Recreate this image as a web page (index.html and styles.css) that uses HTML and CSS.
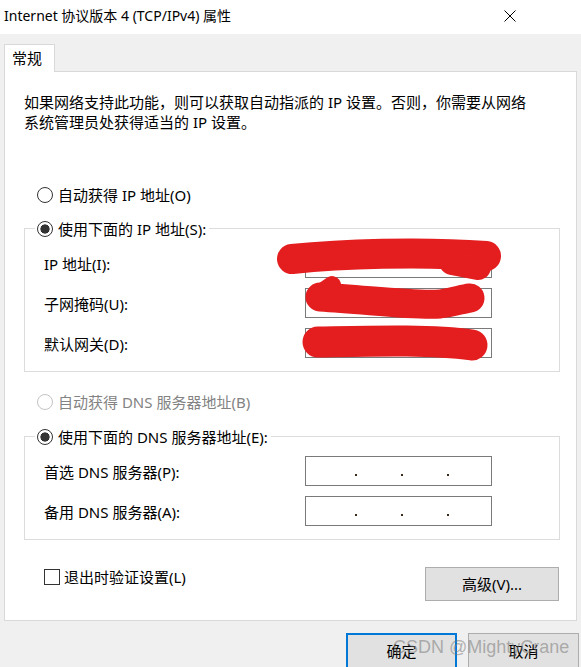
FILE: index.html
```html
<!DOCTYPE html>
<html lang="zh-CN">
<head>
<meta charset="utf-8">
<title>Internet 协议版本 4 (TCP/IPv4) 属性</title>
<link rel="stylesheet" href="styles.css">
</head>
<body>
<div class="window">
  <header class="titlebar">
    <span class="title">Internet 协议版本 4 (TCP/IPv4) 属性</span>
    <svg class="close" viewBox="0 0 12 12" width="12" height="12"><path d="M0.5 0.5 L11.5 11.5 M11.5 0.5 L0.5 11.5" stroke="#000" stroke-width="1" fill="none"/></svg>
  </header>
  <main class="client">
    <div class="tabs"><div class="tab">常规</div></div>
    <section class="panel">
      <p class="intro">如果网络支持此功能，则可以获取自动指派的 IP 设置。否则，你需要从网络<br>系统管理员处获得适当的 IP 设置。</p>

      <label class="opt opt-auto-ip"><input type="radio" class="radio" name="ip">自动获得 IP 地址(O)</label>

      <fieldset class="group group-ip">
        <legend class="legend"><label class="opt"><input type="radio" class="radio" name="ip" checked>使用下面的 IP 地址(S):</label></legend>
        <div class="fields">
          <span class="lbl">IP 地址(I):</span><div class="ipbox"></div>
          <span class="lbl">子网掩码(U):</span><div class="ipbox"></div>
          <span class="lbl">默认网关(D):</span><div class="ipbox"></div>
        </div>
      </fieldset>

      <label class="opt opt-auto-dns disabled"><input type="radio" class="radio" name="dns" disabled>自动获得 DNS 服务器地址(B)</label>

      <fieldset class="group group-dns">
        <legend class="legend"><label class="opt"><input type="radio" class="radio" name="dns" checked>使用下面的 DNS 服务器地址(E):</label></legend>
        <div class="fields">
          <span class="lbl">首选 DNS 服务器(P):</span><div class="ipbox dotted"><i class="dot"></i><i class="dot"></i><i class="dot"></i></div>
          <span class="lbl">备用 DNS 服务器(A):</span><div class="ipbox dotted"><i class="dot"></i><i class="dot"></i><i class="dot"></i></div>
        </div>
      </fieldset>

      <div class="bottom-row">
        <label class="check"><input type="checkbox" class="checkbox">退出时验证设置(L)</label>
        <button class="btn btn-adv">高级(V)...</button>
      </div>
    </section>
    <div class="actions">
      <button class="btn btn-dlg btn-default">确定</button>
      <button class="btn btn-dlg">取消</button>
    </div>
  </main>

  <svg class="redact" viewBox="0 0 581 667" width="581" height="667">
    <g fill="none" stroke="#e41d1f" stroke-linecap="round" stroke-linejoin="round">
      <path d="M292 259 C340 254 420 251 486 256" stroke-width="30"/>
      <path d="M452 262 L478 267" stroke-width="26"/>
      <path d="M320 297 C370 300 415 306 440 304 C455 302 462 299 470 298" stroke-width="29"/>
      <path d="M322 292 L332 285" stroke-width="18"/>
      <path d="M318 342 C370 341 430 339 472 345" stroke-width="31"/>
    </g>
  </svg>
  <div class="watermark">CSDN @MightyCrane</div>
</div>
</body>
</html>
```

FILE: styles.css
```css
* {
  box-sizing: border-box;
}

html,
body {
  margin: 0;
  padding: 0;
}

body {
  width: 581px;
  height: 667px;
  overflow: hidden;
  background: #f0f0f0;
  font-family: "Noto Sans", "Noto Sans CJK SC", sans-serif;
  font-size: 15px;
  color: #000;
}

.window {
  position: relative;
  width: 581px;
  height: 667px;
  overflow: hidden;
}

/* title bar */
.titlebar {
  height: 34px;
  background: #fff;
  display: flex;
  align-items: center;
  justify-content: space-between;
  padding: 0 65px 2px 4px;
}

.title {
  font-size: 14px;
  line-height: 20px;
  white-space: nowrap;
}

.close {
  display: block;
  width: 12px;
  height: 12px;
}

/* client */
.client {
  padding: 10px 0 0 4px;
}

.tabs {
  display: flex;
}

.tab {
  position: relative;
  z-index: 1;
  width: 51px;
  height: 28px;
  margin-bottom: -1px;
  padding-left: 7px;
  background: #fff;
  border: 1px solid #d9d9d9;
  border-bottom: 0;
  line-height: 26px;
}

.panel {
  width: 573px;
  height: 550px;
  background: #fff;
  border: 1px solid #d9d9d9;
  padding: 20px 16px 0 19px;
}

.intro {
  margin: 0;
  line-height: 20px;
  white-space: nowrap;
}

.opt {
  display: flex;
  align-items: center;
  height: 20px;
  line-height: 20px;
  gap: 5px;
  white-space: nowrap;
}

.opt-auto-ip {
  margin: 53px 0 0 13px;
}

.opt-auto-dns {
  margin: 20px 0 0 13px;
}

.disabled {
  color: #838383;
}

.radio {
  appearance: none;
  -webkit-appearance: none;
  margin: 0;
  width: 16px;
  height: 16px;
  flex: none;
  border: 1px solid #333;
  border-radius: 50%;
  background: #fff;
}

.radio:checked {
  background: radial-gradient(circle, #333 0 4.3px, #fff 4.9px);
}

.radio:disabled {
  border-color: #c4c4c4;
}

/* group boxes */
.group {
  margin: 13px 0 0 0;
  padding: 9px 0 13px 0;
  border: 1px solid #dcdcdc;
  min-inline-size: 0;
}

.group-dns {
  margin-top: 14px;
}

.legend {
  margin-left: 10px;
  padding: 0 3px 0 2px;
  height: 21px;
}

.legend .opt {
  height: 21px;
}

.fields {
  display: grid;
  grid-template-columns: 261px 187px;
  row-gap: 10px;
  align-items: center;
  margin-left: 19px;
}

.lbl {
  line-height: 20px;
  white-space: nowrap;
  padding-top: 2px;
}

.ipbox {
  height: 30px;
  border: 1px solid #7a7a7a;
  background: #fff;
}

.dotted {
  display: flex;
  align-items: flex-end;
  gap: 44px;
  padding: 0 0 9px 49px;
}

.dot {
  display: block;
  width: 2px;
  height: 2px;
  background: #3a2a1a;
}

/* bottom row */
.bottom-row {
  display: flex;
  justify-content: space-between;
  align-items: flex-start;
  margin-top: 27px;
}

.check {
  display: flex;
  align-items: center;
  gap: 4px;
  height: 20px;
  line-height: 20px;
  margin-left: 20px;
  white-space: nowrap;
}

.checkbox {
  appearance: none;
  -webkit-appearance: none;
  margin: 0;
  width: 16px;
  height: 16px;
  border: 1px solid #333;
  background: #fff;
}

.btn {
  font-family: inherit;
  font-size: 15px;
  color: #000;
  background: #e1e1e1;
  border: 1px solid #adadad;
  padding: 0;
  margin: 0;
}

.btn-adv {
  width: 134px;
  height: 34px;
  margin-right: 1px;
  padding-bottom: 1px;
}

.actions {
  display: flex;
  justify-content: flex-end;
  gap: 11px;
  margin-top: 12px;
  padding-right: 2px;
}

.btn-dlg {
  width: 111px;
  height: 36px;
  padding-bottom: 1px;
}

.btn-default {
  border: 2px solid #0078d7;
}

/* overlays */
.redact {
  position: absolute;
  left: 0;
  top: 0;
  pointer-events: none;
}

.watermark {
  position: absolute;
  left: 393px;
  top: 637px;
  font-family: "Liberation Sans", Arial, sans-serif;
  font-size: 18px;
  line-height: 20px;
  color: rgba(120, 120, 120, 0.55);
  white-space: nowrap;
  pointer-events: none;
}
```
